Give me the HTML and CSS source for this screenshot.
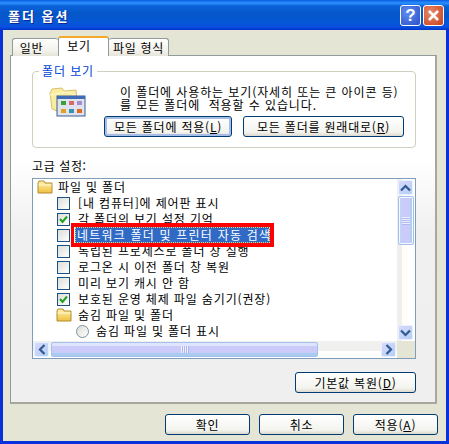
FILE: index.html
```html
<!DOCTYPE html>
<html lang="ko">
<head>
  <meta charset="UTF-8" />
  <title>폴더 옵션</title>
  <link rel="stylesheet" href="styles.css">
</head>
<body>
<svg class="defs" width="0" height="0">
  <defs>
    <linearGradient id="foldergrad" x1="0" y1="0" x2="0" y2="1">
      <stop offset="0" stop-color="#fff3b0"/>
      <stop offset="1" stop-color="#f0c040"/>
    </linearGradient>
    <symbol id="folder" viewBox="0 0 16 14">
      <path d="M1 3 L2 1 H7 L8 3 H15 V13 H1 Z" fill="url(#foldergrad)" stroke="#b08a30"/>
      <path d="M1.500 5 H14.500" stroke="#fff8d0"/>
    </symbol>
  </defs>
</svg>

<div class="window">
  <div class="titlebar">
    <div class="title">폴더 옵션</div>
    <div class="cap-buttons">
      <div class="cap-btn help">?</div>
      <div class="cap-btn close">
        <svg width="13" height="13" viewBox="0 0 13 13"><path d="M2 2 L11 11 M11 2 L2 11" stroke="#fff" stroke-width="2.600"/></svg>
      </div>
    </div>
  </div>

  <div class="client">
    <div class="tabs">
      <div class="tab tab-first">일반</div>
      <div class="tab active">보기</div>
      <div class="tab tab-last">파일 형식</div>
    </div>

    <div class="panel">
      <fieldset class="group">
        <legend>폴더 보기</legend>
        <div class="group-body">
          <svg class="view-icon" width="37" height="30" viewBox="0 0 37 30">
            <path d="M1 6 L3 2 L13 1 L15 4 L27 3 L28 14 L8 24 L3 22 Z" fill="#f9eda0" stroke="#d8c070"/>
            <path d="M1 8 L18 5 L26 8" fill="none" stroke="#fff8d0"/>
            <rect x="8" y="9" width="28" height="20" fill="#dfe3ee" stroke="#3c5a92"/>
            <rect x="8" y="9" width="28" height="3" fill="#3f6cb8"/>
            <rect x="12" y="14" width="5" height="4" fill="#3aa03a"/>
            <rect x="20" y="14" width="5" height="4" fill="#d86a6a"/>
            <rect x="28" y="14" width="5" height="4" fill="#a78ad0"/>
            <rect x="12" y="22" width="5" height="4" fill="#e0a020"/>
            <rect x="20" y="22" width="5" height="4" fill="#3a90b0"/>
            <rect x="28" y="22" width="5" height="4" fill="#e06a20"/>
          </svg>
          <div class="group-main">
            <p class="group-text">이 폴더에 사용하는 보기(자세히 또는 큰 아이콘 등)<br>를 모든 폴더에 &nbsp;적용할 수 있습니다.</p>
            <div class="group-buttons">
              <div class="btn btn-default btn-apply">모든 폴더에 적용(<u>L</u>)</div>
              <div class="btn btn-restore">모든 폴더를 원래대로(<u>R</u>)</div>
            </div>
          </div>
        </div>
      </fieldset>

      <div class="list-label">고급 설정:</div>
      <div class="list">
        <div class="rows">
          <div class="row"><svg class="folder-icon" width="16" height="14"><use href="#folder"/></svg>파일 및 폴더</div>
          <div class="row lvl1"><span class="check"></span>[내 컴퓨터]에 제어판 표시</div>
          <div class="row lvl1"><span class="check"><svg width="11" height="11" viewBox="0 0 11 11"><path d="M2 5 L4.500 8 L9 2.500" fill="none" stroke="#21a121" stroke-width="2"/></svg></span>각 폴더의 보기 설정 기억</div>
          <div class="row lvl1"><span class="check"></span><span class="selected">네트워크 폴더 및 프린터 자동 검색</span></div>
          <div class="row lvl1"><span class="check"></span>독립된 프로세스로 폴더 창 실행</div>
          <div class="row lvl1"><span class="check"></span>로그온 시 이전 폴더 창 복원</div>
          <div class="row lvl1"><span class="check"></span>미리 보기 캐시 안 함</div>
          <div class="row lvl1"><span class="check"><svg width="11" height="11" viewBox="0 0 11 11"><path d="M2 5 L4.500 8 L9 2.500" fill="none" stroke="#21a121" stroke-width="2"/></svg></span>보호된 운영 체제 파일 숨기기(권장)</div>
          <div class="row lvl1 folder-row"><svg class="folder-icon" width="16" height="14"><use href="#folder"/></svg>숨김 파일 및 폴더</div>
          <div class="row lvl2"><span class="radio"></span>숨김 파일 및 폴더 표시</div>
        </div>
        <div class="vscroll">
          <div class="sb-btn"><svg width="11" height="8" viewBox="0 0 11 8"><path d="M1 6.500 L5.500 2 L10 6.500" fill="none" stroke="#2f5a94" stroke-width="2.200"/></svg></div>
          <div class="sb-thumb-v"><span class="grip-v"></span></div>
          <div class="sb-track"></div>
          <div class="sb-btn"><svg width="11" height="8" viewBox="0 0 11 8"><path d="M1 1.500 L5.500 6 L10 1.500" fill="none" stroke="#2f5a94" stroke-width="2.200"/></svg></div>
        </div>
        <div class="hscroll">
          <div class="sb-btn"><svg width="8" height="11" viewBox="0 0 8 11"><path d="M6.500 1 L2 5.500 L6.500 10" fill="none" stroke="#2f5a94" stroke-width="2.200"/></svg></div>
          <div class="sb-thumb-h"><span class="grip-h"></span></div>
          <div class="sb-track"></div>
          <div class="sb-btn"><svg width="8" height="11" viewBox="0 0 8 11"><path d="M1.500 1 L6 5.500 L1.500 10" fill="none" stroke="#2f5a94" stroke-width="2.200"/></svg></div>
        </div>
        <div class="corner"></div>
      </div>

      <div class="reset-line">
        <div class="btn btn-reset">기본값 복원(<u>D</u>)</div>
      </div>
      <div class="red-frame"></div>
    </div>

    <div class="dialog-buttons">
      <div class="btn btn-dlg">확인</div>
      <div class="btn btn-dlg">취소</div>
      <div class="btn btn-dlg">적용(<u>A</u>)</div>
    </div>
  </div>
</div>
</body>
</html>
```

FILE: styles.css
```css
* {
  box-sizing: border-box;
}

body {
  margin: 0;
  background: #fff;
  font-family: "Noto Sans CJK KR", "Liberation Sans", sans-serif;
  font-size: 12px;
  color: #000;
  overflow: hidden;
}

.defs {
  position: absolute;
}

.window {
  width: 449px;
  height: 444px;
  display: flex;
  flex-direction: column;
  background: #0831d9;
  padding: 0 3px 3px 3px;
}

.titlebar {
  height: 30px;
  margin: 0 -3px;
  padding: 0 5px 0 8px;
  display: flex;
  align-items: center;
  justify-content: space-between;
  background: linear-gradient(#0a5be0 0, #2b90ff 3px, #0a62d8 6px, #0556c8 14px, #0558d6 22px, #0a50e0 27px, #0032c8 30px);
}

.title {
  color: #fff;
  font-size: 13px;
  font-weight: 700;
  letter-spacing: 2px;
  text-shadow: 1px 1px 0 #0a2a90;
  padding-top: 1px;
}

.cap-buttons {
  display: flex;
  gap: 2px;
  margin-top: 1px;
}

.cap-btn {
  width: 21px;
  height: 21px;
  border: 1px solid #fff;
  border-radius: 3px;
  display: flex;
  align-items: center;
  justify-content: center;
  color: #fff;
  font-family: "Liberation Sans", sans-serif;
  font-weight: 700;
  font-size: 17px;
}

.help {
  background: radial-gradient(circle at 35% 35%, #5f8df0, #2a50c8);
}

.close {
  background: radial-gradient(circle at 35% 35%, #e8886a, #c8401c);
}

.client {
  flex: 1;
  background: #e5e5d6;
  padding: 6px 9px 0 7px;
  display: flex;
  flex-direction: column;
}

.tabs {
  display: flex;
  padding-left: 2px;
  height: 20px;
  align-items: flex-end;
  position: relative;
  z-index: 1;
  margin-bottom: -1px;
}

.tab {
  height: 18px;
  display: flex;
  align-items: center;
  justify-content: center;
  background: linear-gradient(#fff, #f2f1ea 70%, #e6e5da);
  border: 1px solid #919b9c;
  border-bottom: 0;
  border-radius: 3px 3px 0 0;
  letter-spacing: 0.7px;
}

.tab-first {
  width: 46px;
  border-right: 0;
  padding-right: 8px;
}

.tab-last {
  width: 60px;
  border-left: 0;
}

.tab.active {
  width: 51px;
  height: 20px;
  background: #fff;
  border-top: 2px solid #f1a82b;
  border-bottom: 0;
  padding: 0 9px 3px 0;
}

.panel {
  height: 349px;
  position: relative;
  background: linear-gradient(#fff 0, #fff 105px, #f0f0f0 175px, #efefef 100%);
  border: 1px solid #919b9c;
  border-right: 2px solid #a7a79c;
  border-bottom: 2px solid #a7a79c;
  padding: 7px 19px 0 21px;
}

.group {
  margin: 0;
  padding: 0 0 0 16px;
  height: 85px;
  border: 1px solid #d0d0bf;
  border-radius: 4px;
}

.group legend {
  color: #0046d5;
  padding: 0 3px;
  margin-left: -10px;
  line-height: 16px;
  letter-spacing: 0.9px;
}

.group-body {
  display: flex;
  padding-top: 1px;
}

.view-icon {
  flex: none;
  margin-top: 7px;
}

.group-main {
  margin-left: 18px;
  flex: 1;
}

.group-text {
  margin: 5px 0 0 16px;
  line-height: 13px;
  letter-spacing: 0.9px;
  white-space: nowrap;
}

.group-buttons {
  display: flex;
  gap: 11px;
  margin-top: 5px;
}

.btn {
  height: 21px;
  display: flex;
  align-items: center;
  justify-content: center;
  background: linear-gradient(#fff, #f3f3ee 80%, #dcd8cc);
  border: 1px solid #003c74;
  border-radius: 3px;
  letter-spacing: 0.8px;
  white-space: nowrap;
}

.btn-default {
  box-shadow: inset 0 0 0 2px #a6bde8;
}

.btn-apply {
  width: 128px;
}

.btn-restore {
  width: 161px;
}

.list-label {
  margin-top: 10px;
  line-height: 16px;
  letter-spacing: 0.6px;
}

.list {
  margin-top: 4px;
  height: 181px;
  display: grid;
  grid-template-columns: 1fr 18px;
  grid-template-rows: 1fr 17px;
  border: 1px solid #7f9db9;
  background: #fff;
}

.rows {
  overflow: hidden;
}

.row {
  height: 16px;
  line-height: 14px;
  display: flex;
  align-items: center;
  white-space: nowrap;
  letter-spacing: 0.85px;
  padding-left: 4px;
}

.folder-icon {
  margin-right: 5px;
  flex: none;
}

.lvl1 {
  padding-left: 24px;
}

.lvl2 {
  padding-left: 43px;
}

.folder-row {
  padding-left: 23px;
}

.folder-row .folder-icon {
  margin-right: 6px;
}

.check {
  width: 13px;
  height: 13px;
  flex: none;
  margin-right: 8px;
  border: 1px solid #1c5180;
  background: linear-gradient(135deg, #dcdcd7, #fff);
  display: flex;
  align-items: center;
  justify-content: center;
}

.radio {
  width: 13px;
  height: 13px;
  flex: none;
  margin-right: 7px;
  border: 1px solid #7f8fa0;
  border-radius: 50%;
  background: linear-gradient(135deg, #dcdcd7, #fff);
}

.selected {
  background: #316ac5;
  color: #fff;
  height: 16px;
  line-height: 15px;
  letter-spacing: 1.2px;
  outline: 1px dotted #e8d070;
  outline-offset: -1px;
  padding: 0 2px;
  margin-left: -3px;
  width: 195px;
}

.vscroll {
  display: flex;
  flex-direction: column;
  padding: 1px;
  background: linear-gradient(90deg, #efefef 0 5px, #fffdf6 5px 10px, #fff 10px);
}

.hscroll {
  display: flex;
  padding: 1px;
  background: linear-gradient(#f0f0ef 0 10px, #fff 10px);
}

.corner {
  background: #e5e5d6;
}

.sb-btn {
  width: 15px;
  height: 15px;
  flex: none;
  display: flex;
  align-items: center;
  justify-content: center;
  background: linear-gradient(135deg, #d8d8fc, #b4d0f4);
  border: 1px solid #e8f0ff;
  border-radius: 2px;
}

.sb-track {
  flex: 1;
}

.sb-thumb-v {
  height: 49px;
  margin: 1px 0;
  display: flex;
  align-items: center;
  justify-content: center;
  background: linear-gradient(90deg, #b8d8f8 0 2px, #cbcaf8 2px 11px, #b0d0f0 11px);
  border: 1px solid #a4c0ec;
  outline: 1px solid #f4f8ff;
  outline-offset: -2px;
  border-radius: 2px;
}

.grip-v {
  width: 8px;
  height: 8px;
  background: repeating-linear-gradient(#eef0ff 0 1px, #b0b8f0 1px 2px);
}

.sb-thumb-h {
  width: 267px;
  margin: 0 1px 0 2px;
  display: flex;
  align-items: center;
  justify-content: center;
  background: linear-gradient(#dfe4ff 0 3px, #cbcaf8 3px 10px, #a8ccf0 10px);
  border: 1px solid #a4c0ec;
  border-radius: 2px;
}

.grip-h {
  width: 8px;
  height: 7px;
  background: repeating-linear-gradient(90deg, #eef0ff 0 1px, #b0b8f0 1px 2px);
}

.reset-line {
  display: flex;
  justify-content: flex-end;
  margin-top: 13px;
}

.btn-reset {
  width: 121px;
}

.red-frame {
  position: absolute;
  left: 60px;
  top: 167px;
  width: 203px;
  height: 24px;
  border: 4px solid #f00;
  border-left-width: 3px;
}

.dialog-buttons {
  display: flex;
  justify-content: flex-end;
  gap: 9px;
  margin-top: 10px;
  margin-right: -1px;
}

.btn-dlg {
  width: 85px;
}
```
